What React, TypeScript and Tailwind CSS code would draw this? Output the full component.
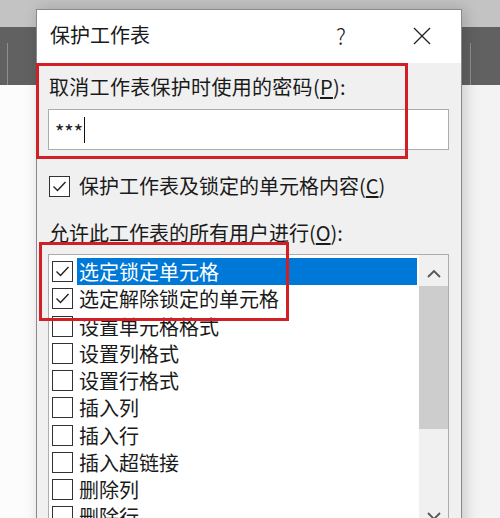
import React from "react";

const FONT = { fontFamily: '"Noto Sans CJK SC", "Noto Sans", sans-serif' };

function Check({ checked }: { checked: boolean }) {
  return (
    <div className="w-[21px] h-[21px] border border-[#333] bg-white flex items-center justify-center shrink-0">
      {checked && (
        <svg width="17" height="17" viewBox="0 0 17 17">
          <polyline points="2.5,8.5 6.5,12.5 14.5,4" fill="none" stroke="#222" strokeWidth="1.4" />
        </svg>
      )}
    </div>
  );
}

const items: { label: string; checked: boolean; selected?: boolean }[] = [
  { label: "选定锁定单元格", checked: true, selected: true },
  { label: "选定解除锁定的单元格", checked: true },
  { label: "设置单元格格式", checked: false },
  { label: "设置列格式", checked: false },
  { label: "设置行格式", checked: false },
  { label: "插入列", checked: false },
  { label: "插入行", checked: false },
  { label: "插入超链接", checked: false },
  { label: "删除列", checked: false },
  { label: "删除行", checked: false },
];

export default function App() {
  return (
    <div className="relative w-[500px] h-[518px] overflow-hidden" style={FONT}>
      {/* desktop background */}
      <div className="flex flex-col h-full">
        <div className="h-[27px] bg-[#c3c3c3]" />
        <div className="h-[58px] bg-[#616161] flex justify-between">
          <div className="ml-[7px] mt-[16px] w-px bg-[#8e8e8e]" />
          <div className="mr-[29px] mt-[16px] w-px bg-[#8e8e8e]" />
        </div>
        <div className="flex-1 flex">
          <div className="w-[36px] bg-[#fcfcfc]" />
          <div className="flex-1 bg-[#f3f3f3]" />
        </div>
      </div>

      {/* dialog window */}
      <div className="absolute left-[36px] top-[9px] w-[426px] h-[530px] border border-[#8a8a8a] bg-[#f0f0f0] shadow-[3px_0_14px_rgba(0,0,0,0.18)] flex flex-col">
        <div className="h-[53px] bg-white flex items-start pt-[11px] pl-[13px] pr-[30px] text-[#1a1a1a]">
          <div className="text-[20px] leading-[28px]">保护工作表</div>
          <div className="ml-auto text-[22px] leading-[28px] mr-[67px] font-light">?</div>
          <svg className="mt-[6px]" width="18" height="18" viewBox="0 0 18 18">
            <line x1="1" y1="1" x2="17" y2="17" stroke="#222" strokeWidth="1.3" />
            <line x1="17" y1="1" x2="1" y2="17" stroke="#222" strokeWidth="1.3" />
          </svg>
        </div>

        <div className="flex flex-col pl-[11px] pr-[12px] text-[#1a1a1a] text-[20px]">
          <div className="mt-[10px] leading-[28px] pl-[1px] tracking-[0.3px]">
            取消工作表保护时使用的密码(<span className="underline underline-offset-2">P</span>):
          </div>
          <div className="mt-[8px] h-[41px] bg-white border border-[#acacac] flex items-center pl-[6px]">
            <span className="text-[20px] leading-[20px] tracking-[0px] pt-[4px]">***</span>
            <span className="w-px h-[26px] bg-[#111] ml-[1px]" />
          </div>
          <div className="mt-[22px] h-[28px] flex items-center gap-[9px] pl-[1px]">
            <Check checked={true} />
            <span className="leading-[28px]">
              保护工作表及锁定的单元格内容(<span className="underline underline-offset-2">C</span>)
            </span>
          </div>
          <div className="mt-[19px] leading-[28px] pl-[1px]">
            允许此工作表的所有用户进行(<span className="underline underline-offset-2">O</span>):
          </div>
          <div className="mt-[7px] h-[275px] bg-white border border-[#acacac] flex">
            <div className="flex-1 flex flex-col pt-[3px] pl-[3px]">
              {items.map((it) => (
                <div key={it.label} className="h-[27.25px] flex items-center shrink-0">
                  <Check checked={it.checked} />
                  <div
                    className={
                      it.selected
                        ? "ml-[4px] flex-1 h-full flex items-center bg-[#0078d7] text-white pl-[2px]"
                        : "ml-[4px] flex-1 h-full flex items-center pl-[2px]"
                    }
                  >
                    <span className="leading-[27px]">{it.label}</span>
                  </div>
                </div>
              ))}
            </div>
            <div className="w-[2px]" />
            <div className="w-[29px] bg-[#f0f0f0] flex flex-col items-center">
              <div className="h-[31px] flex items-center justify-center pt-[5px]">
                <svg width="14" height="9" viewBox="0 0 14 9">
                  <polyline points="1,8 7,2 13,8" fill="none" stroke="#555" strokeWidth="1.8" />
                </svg>
              </div>
              <div className="w-full h-[143px] bg-[#cdcdcd]" />
              <div className="flex-1" />
              <div className="h-[16px] flex items-start justify-center">
                <svg width="14" height="9" viewBox="0 0 14 9">
                  <polyline points="1,1 7,7 13,1" fill="none" stroke="#555" strokeWidth="1.8" />
                </svg>
              </div>
            </div>
          </div>
        </div>

        {/* red annotation boxes */}
        <div className="absolute left-[-1px] top-[53px] w-[372px] h-[96px] border-[3px] border-[#d11f26]" />
        <div className="absolute left-[2px] top-[232px] w-[250px] h-[79px] border-[3px] border-[#d11f26]" />
      </div>
    </div>
  );
}
